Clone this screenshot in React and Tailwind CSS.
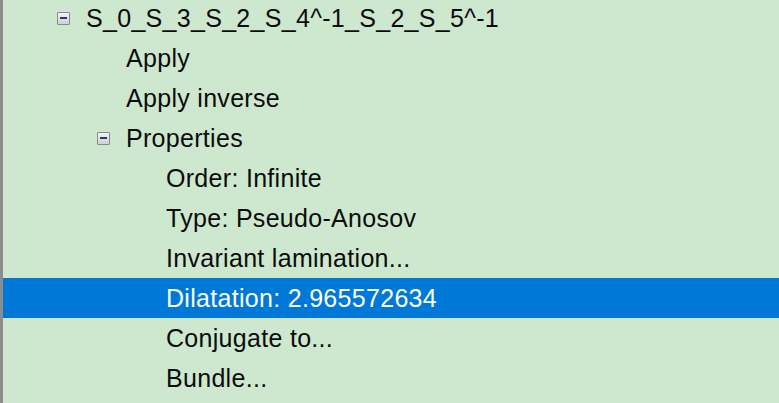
import React from "react";

const rows = [
  { level: 0, label: "S_0_S_3_S_2_S_4^-1_S_2_S_5^-1", expander: true },
  { level: 1, label: "Apply" },
  { level: 1, label: "Apply inverse" },
  { level: 1, label: "Properties", expander: true },
  { level: 2, label: "Order: Infinite" },
  { level: 2, label: "Type: Pseudo-Anosov" },
  { level: 2, label: "Invariant lamination..." },
  { level: 2, label: "Dilatation: 2.965572634", selected: true },
  { level: 2, label: "Conjugate to..." },
  { level: 2, label: "Bundle..." },
];

const indents = ["pl-[83px]", "pl-[123px]", "pl-[163px]"];

function Expander() {
  return (
    <span className="mr-[16px] flex h-[13px] w-[13px] items-center justify-center rounded-[1px] border border-[#8a8a8a] bg-gradient-to-b from-[#f4f4f4] to-[#cfcfcf]">
      <span className="h-[2px] w-[7px] bg-[#1e3a80]" />
    </span>
  );
}

export default function App() {
  return (
    <div className="h-[403px] w-[779px] overflow-hidden border-l-[3px] border-[#8c8c8c] bg-[#cde8cf] font-['Liberation_Sans',Arial,sans-serif] text-[25px] tracking-[0.3px] text-[#0c0c0c]">
      <div className="-mt-[2px] flex flex-col">
        {rows.map((r) => (
          <div
            key={r.label}
            className={`flex h-10 items-center ${indents[r.level]} ${
              r.selected ? "bg-[#0078d7] text-white" : ""
            }`}
          >
            {r.expander ? (
              <span className="-ml-[29px] flex items-center">
                <Expander />
              </span>
            ) : null}
            <span className="whitespace-pre leading-none">{r.label}</span>
          </div>
        ))}
      </div>
    </div>
  );
}
